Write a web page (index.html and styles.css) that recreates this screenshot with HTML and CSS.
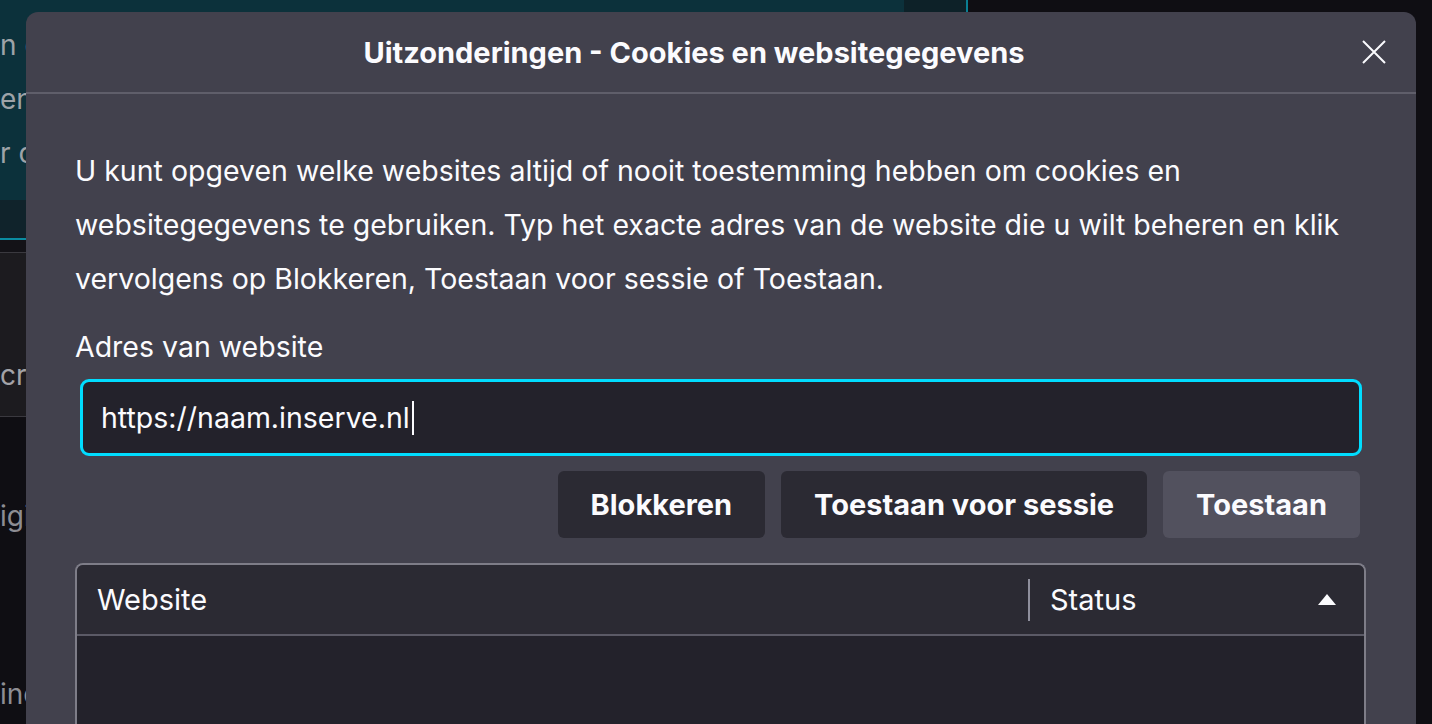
FILE: index.html
```html
<!DOCTYPE html>
<html lang="nl">
<head>
  <meta charset="UTF-8" />
  <meta name="viewport" content="width=device-width, initial-scale=1.0" />
  <title>Uitzonderingen - Cookies en websitegegevens</title>
  <link rel="stylesheet" href="styles.css">
</head>
<body>
  <div class="page">
    <div class="notice">
      <div class="notice-main">
        <p class="notice-line">n c</p>
        <p class="notice-line">en.</p>
        <p class="notice-line">r d</p>
      </div>
      <div class="notice-side"></div>
    </div>
    <div class="notice-foot"></div>
    <div class="gap-band"></div>
    <div class="setting-row"><span class="setting-text">cr</span></div>
    <div class="setting-list">
      <p class="list-line first">igi</p>
      <p class="list-line last">inc</p>
    </div>
  </div>

  <div class="dialog">
    <div class="dialog-header">
      <h1 class="dialog-title">Uitzonderingen - Cookies en websitegegevens</h1>
      <button class="close-btn" aria-label="Sluiten">
        <svg width="24" height="24" viewBox="0 0 24 24">
          <path d="M1 1 L23 23 M23 1 L1 23" stroke="#fbfbfe" stroke-width="2" fill="none" />
        </svg>
      </button>
    </div>

    <div class="dialog-body">
      <p class="intro">U kunt opgeven welke websites altijd of nooit toestemming hebben om cookies en<br>
        websitegegevens te gebruiken. Typ het exacte adres van de website die u wilt beheren en klik<br>
        vervolgens op Blokkeren, Toestaan voor sessie of Toestaan.</p>

      <label class="field-label">Adres van website</label>
      <div class="field">
        <span class="field-value">https://naam.inserve.nl</span><span class="caret"></span>
      </div>

      <div class="actions">
        <button class="btn">Blokkeren</button>
        <button class="btn">Toestaan voor sessie</button>
        <button class="btn btn-muted">Toestaan</button>
      </div>

      <div class="site-table">
        <div class="table-head">
          <div class="col-site">Website</div>
          <div class="col-status">
            <span>Status</span>
            <span class="sort-arrow"></span>
          </div>
        </div>
        <div class="table-body"></div>
      </div>
    </div>
  </div>
</body>
</html>
```

FILE: styles.css
```css
html, body {
  margin: 0;
  height: 100%;
  overflow: hidden;
}
body {
  font-family: Inter, "Noto Sans", sans-serif;
  background-color: #0f0e13;
  color: #fbfbfe;
  position: relative;
}

/* page behind the dialog */
.page {
  width: 968px;
}
.notice {
  display: flex;
  height: 200px;
  border-right: 2px solid #0a7f93;
}
.notice-main {
  flex: 1;
  background-color: #0c313b;
  padding-top: 18px;
}
.notice-side {
  width: 62px;
  background-color: #0d2128;
}
.notice-line {
  margin: 0;
  font-size: 28px;
  line-height: 54px;
  color: #9ea3a8;
}
.notice-foot {
  height: 38px;
  background-color: #10232b;
  border-bottom: 2px solid #0a8ca1;
}
.gap-band {
  height: 12px;
  background-color: #131217;
  border-bottom: 1px solid #3a393f;
}
.setting-row {
  height: 164px;
  background-color: #1c1b1f;
  border-bottom: 1px solid #3a393f;
  display: flex;
  align-items: center;
  padding-top: 80px;
  box-sizing: border-box;
}
.setting-text {
  font-size: 28px;
  color: #a3a3a8;
}
.setting-list {
  padding-top: 82px;
}
.list-line {
  margin: 0;
  font-size: 28px;
  color: #8d8d93;
}
.list-line.last {
  margin-top: 144px;
}

/* dialog */
.dialog {
  position: absolute;
  left: 26px;
  top: 12px;
  width: 1390px;
  bottom: -40px;
  background-color: #42414d;
  border-radius: 12px;
}
.dialog-header {
  display: flex;
  align-items: center;
  height: 80px;
  padding-right: 30px;
  border-bottom: 2px solid #5f5e6a;
}
.dialog-title {
  flex: 1;
  margin: 0;
  text-align: center;
  font-size: 29px;
  font-weight: 700;
}
.close-btn {
  width: 24px;
  height: 24px;
  padding: 0;
  border: none;
  background: none;
  display: flex;
}
.dialog-body {
  padding: 0 50px 0 49px;
}
.intro {
  margin: 50px -20px 0 0;
  font-size: 28.5px;
  line-height: 54px;
}
.field-label {
  display: block;
  margin-top: 21px;
  font-size: 28.5px;
  line-height: 40px;
}
.field {
  margin: 12px 4px 0 5px;
  height: 77px;
  box-sizing: border-box;
  border: 3px solid #00ddff;
  border-radius: 9px;
  background-color: #23222b;
  padding-left: 18px;
  display: flex;
  align-items: center;
}
.field-value {
  font-size: 28.5px;
}
.caret {
  width: 2px;
  height: 34px;
  margin-left: 2px;
  background-color: #fbfbfe;
}
.actions {
  display: flex;
  justify-content: flex-end;
  gap: 16px;
  margin: 15px 6px 0 0;
}
.btn {
  height: 67px;
  padding: 0 33px;
  border: none;
  border-radius: 6px;
  background-color: #2b2a33;
  color: #fbfbfe;
  font-family: inherit;
  font-size: 29px;
  font-weight: 700;
}
.btn-muted {
  background-color: #52515e;
}
.site-table {
  margin-top: 25px;
  border: 2px solid #7e7d88;
  border-bottom: none;
  border-radius: 8px 8px 0 0;
  overflow: hidden;
}
.table-head {
  display: flex;
  align-items: center;
  height: 69px;
  background-color: #2b2a33;
  border-bottom: 2px solid #5b5a66;
  font-size: 29px;
}
.col-site {
  flex: 1;
  padding-left: 20px;
}
.col-status {
  width: 336px;
  height: 42px;
  box-sizing: border-box;
  border-left: 2px solid #8f8f9d;
  padding: 0 28px 0 20px;
  display: flex;
  align-items: center;
  justify-content: space-between;
}
.sort-arrow {
  width: 0;
  height: 0;
  border-left: 9px solid transparent;
  border-right: 9px solid transparent;
  border-bottom: 11px solid #fbfbfe;
}
.table-body {
  height: 200px;
  background-color: #23222b;
}
```
